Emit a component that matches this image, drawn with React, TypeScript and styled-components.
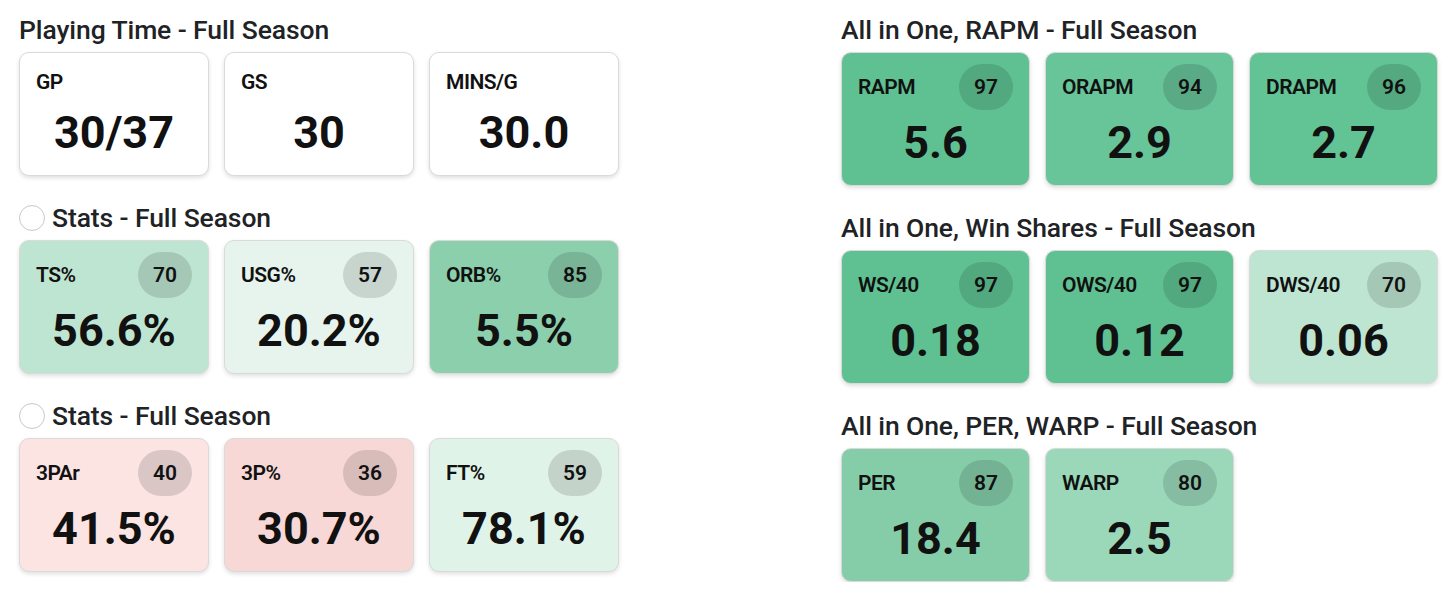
import React from 'react';
import styled, { createGlobalStyle } from 'styled-components';

const GlobalStyle = createGlobalStyle`
  body {
    margin: 0;
    padding: 0;
    background: #ffffff;
    font-family: Roboto, 'Noto Sans', Arial, sans-serif;
    color: #111111;
  }
`;

const Page = styled.div`
  display: grid;
  grid-template-columns: 600px 597px;
  column-gap: 222px;
  padding: 15px 0 0 19px;
`;

const Column = styled.div`
  display: flex;
  flex-direction: column;
  gap: 27px;
`;

const Section = styled.section`
  display: flex;
  flex-direction: column;
  gap: 7px;
`;

const TitleRow = styled.div`
  display: flex;
  align-items: center;
  gap: 7px;
  height: 30px;
`;

const Radio = styled.span`
  width: 24px;
  height: 24px;
  border-radius: 50%;
  border: 1.5px solid #c9c9c9;
  background: #fff;
  flex: none;
`;

const Title = styled.h2`
  margin: 0;
  font-size: 26.5px;
  line-height: 30px;
  font-weight: 500;
  color: #202226;
  letter-spacing: -0.1px;
`;

const Cards = styled.div<{ $col: number }>`
  display: grid;
  grid-template-columns: repeat(3, ${(p) => p.$col}px);
  gap: 15px;
`;

const Card = styled.div<{ $bg: string }>`
  background: ${(p) => p.$bg};
  border: 1px solid #dadada;
  border-radius: 10px;
  box-shadow: 0 2px 4px rgba(0, 0, 0, 0.13);
  padding: 11px 16px 11px;
`;

const Header = styled.div`
  display: flex;
  align-items: center;
  justify-content: space-between;
  min-height: 36px;
`;

const Label = styled.span`
  font-size: 21px;
  font-weight: 600;
  letter-spacing: -0.5px;
  color: #111;
`;

const Badge = styled.span`
  width: 54px;
  height: 46px;
  border-radius: 23px;
  background: rgba(0, 0, 0, 0.13);
  display: flex;
  align-items: center;
  justify-content: center;
  font-size: 21px;
  font-weight: 600;
  color: #111;
`;

const Value = styled.div`
  margin-top: 2px;
  text-align: center;
  font-size: 45px;
  line-height: 62px;
  font-weight: 700;
  color: #111;
`;

type Stat = { label: string; value: string; pct?: number; bg: string };

type Block = { title: string; radio?: boolean; stats: Stat[] };

const left: Block[] = [
  {
    title: 'Playing Time - Full Season',
    stats: [
      { label: 'GP', value: '30/37', bg: '#ffffff' },
      { label: 'GS', value: '30', bg: '#ffffff' },
      { label: 'MINS/G', value: '30.0', bg: '#ffffff' },
    ],
  },
  {
    title: 'Stats - Full Season',
    radio: true,
    stats: [
      { label: 'TS%', value: '56.6%', pct: 70, bg: '#bee5d2' },
      { label: 'USG%', value: '20.2%', pct: 57, bg: '#e6f4ed' },
      { label: 'ORB%', value: '5.5%', pct: 85, bg: '#8bcfad' },
    ],
  },
  {
    title: 'Stats - Full Season',
    radio: true,
    stats: [
      { label: '3PAr', value: '41.5%', pct: 40, bg: '#fbe4e2' },
      { label: '3P%', value: '30.7%', pct: 36, bg: '#f7d8d6' },
      { label: 'FT%', value: '78.1%', pct: 59, bg: '#e0f3e9' },
    ],
  },
];

const right: Block[] = [
  {
    title: 'All in One, RAPM - Full Season',
    stats: [
      { label: 'RAPM', value: '5.6', pct: 97, bg: '#5fc192' },
      { label: 'ORAPM', value: '2.9', pct: 94, bg: '#68c599' },
      { label: 'DRAPM', value: '2.7', pct: 96, bg: '#62c394' },
    ],
  },
  {
    title: 'All in One, Win Shares - Full Season',
    stats: [
      { label: 'WS/40', value: '0.18', pct: 97, bg: '#5fc192' },
      { label: 'OWS/40', value: '0.12', pct: 97, bg: '#5fc192' },
      { label: 'DWS/40', value: '0.06', pct: 70, bg: '#bee5d2' },
    ],
  },
  {
    title: 'All in One, PER, WARP - Full Season',
    stats: [
      { label: 'PER', value: '18.4', pct: 87, bg: '#85cda9' },
      { label: 'WARP', value: '2.5', pct: 80, bg: '#9ad8b9' },
    ],
  },
];

const StatCard = ({ stat }: { stat: Stat }) => (
  <Card $bg={stat.bg}>
    <Header>
      <Label>{stat.label}</Label>
      {stat.pct !== undefined && <Badge>{stat.pct}</Badge>}
    </Header>
    <Value>{stat.value}</Value>
  </Card>
);

const Blocks = ({ blocks, col }: { blocks: Block[]; col: number }) => (
  <Column>
    {blocks.map((b, i) => (
      <Section key={i}>
        <TitleRow>
          {b.radio && <Radio />}
          <Title>{b.title}</Title>
        </TitleRow>
        <Cards $col={col}>
          {b.stats.map((s) => (
            <StatCard key={s.label} stat={s} />
          ))}
        </Cards>
      </Section>
    ))}
  </Column>
);

const App: React.FC = () => (
  <>
    <GlobalStyle />
    <Page>
      <Blocks blocks={left} col={190} />
      <Blocks blocks={right} col={189} />
    </Page>
  </>
);

export default App;
